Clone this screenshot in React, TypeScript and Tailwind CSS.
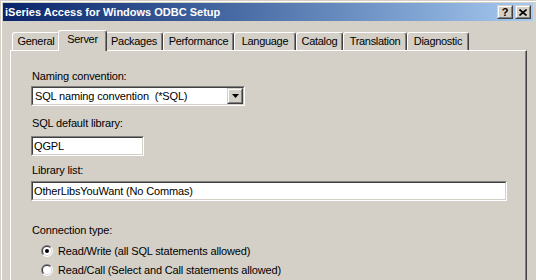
import React from "react";

const tabs = [
  { label: "General", cls: "w-[48px]", sel: false },
  { label: "Server", cls: "w-[49px]", sel: true },
  { label: "Packages", cls: "w-[58px]", sel: false },
  { label: "Performance", cls: "w-[71px]", sel: false },
  { label: "Language", cls: "w-[62px]", sel: false },
  { label: "Catalog", cls: "w-[47px]", sel: false },
  { label: "Translation", cls: "w-[64px]", sel: false },
  { label: "Diagnostic", cls: "w-[62px]", sel: false },
];

function Raised({ children, cls }: { children: React.ReactNode; cls: string }) {
  return (
    <div className={`border border-t-[#d4d0c8] border-l-[#d4d0c8] border-r-[#404040] border-b-[#404040] ${cls}`}>
      <div className="h-full w-full border border-t-white border-l-white border-r-[#808080] border-b-[#808080] bg-[#d4d0c8] flex items-center justify-center">
        {children}
      </div>
    </div>
  );
}

function Sunken({ children, cls }: { children: React.ReactNode; cls: string }) {
  return (
    <div className={`border border-t-[#808080] border-l-[#808080] border-r-white border-b-white ${cls}`}>
      <div className="h-full w-full border border-t-[#404040] border-l-[#404040] border-r-[#d4d0c8] border-b-[#d4d0c8] bg-white flex items-center">
        {children}
      </div>
    </div>
  );
}

function Radio({ checked }: { checked: boolean }) {
  return (
    <svg width="12" height="12" viewBox="0 0 12 12" className="shrink-0">
      <path d="M1.757 10.243 A6 6 0 0 1 10.243 1.757 Z" fill="#808080" />
      <path d="M10.243 1.757 A6 6 0 0 1 1.757 10.243 Z" fill="#ffffff" />
      <path d="M2.464 9.536 A5 5 0 0 1 9.536 2.464 Z" fill="#404040" />
      <path d="M9.536 2.464 A5 5 0 0 1 2.464 9.536 Z" fill="#d4d0c8" />
      <circle cx="6" cy="6" r="4" fill="#ffffff" />
      {checked && <circle cx="6" cy="6" r="2" fill="#000000" />}
    </svg>
  );
}

export default function App() {
  return (
    <div className="w-[536px] h-[280px] overflow-hidden bg-[#d4d0c8] pt-px pl-px font-['Liberation_Sans',Arial,sans-serif] text-black">
      <div className="h-[300px] border-t border-l border-white pt-px pl-px">
        {/* Title bar */}
        <div className="w-[530px] h-[18px] flex items-center bg-gradient-to-r from-[#0a246a] to-[#a6caf0] pl-[2px] pr-[2px]">
          <div className="flex-1 text-white font-bold text-[11px] leading-[13px] pt-px">
            iSeries Access for Windows ODBC Setup
          </div>
          <Raised cls="w-[16px] h-[14px]">
            <span className="font-bold text-[11px] leading-[10px] text-black">?</span>
          </Raised>
          <Raised cls="w-[16px] h-[14px] ml-[2px]">
            <svg width="8" height="7" viewBox="0 0 8 7">
              <path d="M0.5 0.5 L7.5 6.5 M7.5 0.5 L0.5 6.5" stroke="#000" strokeWidth="1.6" />
            </svg>
          </Raised>
        </div>

        {/* Tabs */}
        <div className="mt-[9px] pl-[9px] flex items-end h-[20px]">
          {tabs.map((t) => (
            <div
              key={t.label}
              className={`relative ${t.cls} ${
                t.sel ? "z-10 h-[21px] -mx-[2px] -mb-px" : "h-[18px]"
              } bg-[#d4d0c8] border-l border-t border-white border-r border-r-[#404040] rounded-t-[3px] shadow-[inset_-1px_0_0_#808080] pt-[2px] flex justify-center`}
            >
              <span className="text-[11px] leading-[13px] tracking-[-0.3px] whitespace-nowrap">{t.label}</span>
            </div>
          ))}
        </div>

        {/* Panel */}
        <div className="relative ml-[7px] w-[517px] h-[240px] border-t border-l border-white border-r border-r-[#404040] shadow-[inset_-1px_0_0_#808080] pt-[19px] pl-[20px] text-[11px] leading-[13px] tracking-[-0.15px]">
          <div className="h-[13px] pl-px">Naming convention:</div>
          <Sunken cls="mt-[3px] w-[214px] h-[20px]">
            <span className="flex-1 pl-[2px] whitespace-pre">SQL naming convention  (*SQL)</span>
            <Raised cls="w-[16px] h-[16px]">
              <svg width="7" height="4" viewBox="0 0 7 4">
                <path d="M0 0 H7 L3.5 4 Z" fill="#000" />
              </svg>
            </Raised>
          </Sunken>
          <div className="mt-[11px] h-[13px] pl-px">SQL default library:</div>
          <Sunken cls="mt-[6px] w-[113px] h-[20px]">
            <span className="pl-[1px]">QGPL</span>
          </Sunken>
          <div className="mt-[8px] h-[13px] pl-px">Library list:</div>
          <Sunken cls="mt-[4px] w-[476px] h-[20px]">
            <span className="pl-[1px]">OtherLibsYouWant (No Commas)</span>
          </Sunken>
          <div className="mt-[23px] h-[13px] pl-px">Connection type:</div>
          <div className="mt-[8px] h-[19px] pl-[10px] flex items-start gap-[5px]">
            <Radio checked={true} />
            <span>Read/Write (all SQL statements allowed)</span>
          </div>
          <div className="h-[19px] pl-[10px] flex items-start gap-[5px]">
            <Radio checked={false} />
            <span>Read/Call (Select and Call statements allowed)</span>
          </div>
        </div>
      </div>
    </div>
  );
}
